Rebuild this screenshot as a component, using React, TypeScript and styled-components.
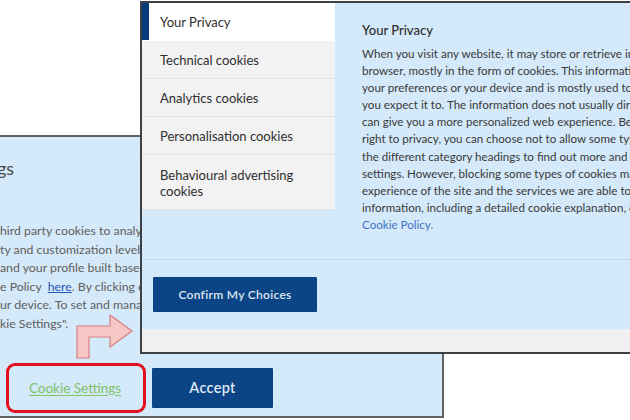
import React from 'react';
import styled, { createGlobalStyle } from 'styled-components';

const GlobalStyle = createGlobalStyle`
  html, body {
    margin: 0;
    padding: 0;
    background: #ffffff;
  }
  body {
    font-family: 'Lato', 'Open Sans', 'Liberation Sans', sans-serif;
    color: #333333;
  }
`;

const Stage = styled.div`
  position: relative;
  width: 630px;
  height: 420px;
  overflow: hidden;
  background: #ffffff;
`;

/* ---------- back window: the cookie banner ---------- */

const Banner = styled.section`
  position: absolute;
  left: -20px;
  top: 135px;
  width: 464px;
  height: 283px;
  box-sizing: border-box;
  border: 2px solid #5e6366;
  background: #d4e9f9;
  display: flex;
  flex-direction: column;
  padding: 19px 0 0 18px;
`;

const BannerTitle = styled.h2`
  margin: 0 0 0 -3px;
  font-size: 18px;
  line-height: 24px;
  font-weight: 400;
  color: #4a4a4a;
`;

const BannerText = styled.div`
  margin-top: 42px;
  font-size: 12.3px;
  line-height: 18.6px;
  color: #606060;
  white-space: nowrap;
`;

const TextLine = styled.div``;

const InlineLink = styled.a`
  color: #2856b0;
  text-decoration: underline;
`;

const BannerActions = styled.div`
  margin-top: 29px;
  margin-left: 6px;
  display: flex;
  align-items: center;
  gap: 6px;
`;

const Highlight = styled.div`
  width: 140px;
  height: 50px;
  box-sizing: border-box;
  border: 3px solid #e3101e;
  border-radius: 9px;
  display: flex;
  align-items: center;
  justify-content: center;
  padding-right: 2px;
`;

const SettingsLink = styled.a`
  font-size: 13.5px;
  color: #7fc16a;
  text-decoration: underline;
  text-underline-offset: 2px;
`;

const PrimaryButton = styled.button<{ $w: number; $h: number; $size: number }>`
  width: ${({ $w }) => $w}px;
  height: ${({ $h }) => $h}px;
  border: none;
  border-radius: 1px;
  background: #0b4586;
  color: #dfe7f1;
  font-family: inherit;
  font-size: ${({ $size }) => $size}px;
  font-weight: 600;
  letter-spacing: 0.3px;
  padding: 0;
  cursor: pointer;
`;

/* ---------- front window: preference centre ---------- */

const Dialog = styled.section`
  position: absolute;
  left: 140px;
  top: 1px;
  width: 520px;
  height: 353px;
  box-sizing: border-box;
  border: 2px solid #3d4144;
  background: #d4e9f9;
  display: grid;
  grid-template-rows: 256px 1px 69px 1fr;
`;

const Main = styled.div`
  display: grid;
  grid-template-columns: 193px 1fr;
`;

const Sidebar = styled.nav`
  display: flex;
  flex-direction: column;
`;

const Tab = styled.div<{ $active?: boolean; $tall?: boolean }>`
  height: ${({ $tall }) => ($tall ? '55px' : '38px')};
  box-sizing: border-box;
  display: flex;
  align-items: ${({ $tall }) => ($tall ? 'flex-start' : 'center')};
  padding: ${({ $tall }) => ($tall ? '12px 0 0 18px' : '0 0 0 18px')};
  border-bottom: 1px solid ${({ $active }) => ($active ? '#ffffff' : '#e2e2e2')};
  background: ${({ $active }) => ($active ? '#ffffff' : '#f2f2f2')};
  box-shadow: ${({ $active }) => ($active ? 'inset 7px 0 0 #073a78' : 'none')};
  font-size: 13px;
  line-height: 16px;
  color: #2f2f2f;
`;

const Content = styled.div`
  padding: 18px 0 0 27px;
  white-space: nowrap;
  overflow: hidden;
`;

const ContentTitle = styled.h3`
  margin: 0 0 6px 0;
  font-size: 13px;
  line-height: 18px;
  font-weight: 500;
  color: #2f2f2f;
`;

const Body = styled.div`
  font-size: 11.6px;
  line-height: 17.1px;
  color: #3a3a3a;
`;

const PolicyLink = styled.a`
  color: #4474c6;
  text-decoration: none;
`;

const Divider = styled.div`
  background: #c3d8e8;
`;

const Footer = styled.div`
  display: flex;
  align-items: center;
  padding-left: 11px;
`;

const Strip = styled.div`
  background: #f0f0f0;
`;

/* ---------- annotation arrow ---------- */

const Arrow = styled.svg`
  position: absolute;
  left: 75px;
  top: 312px;
  width: 60px;
  height: 50px;
  overflow: visible;
`;

const bodyLines = [
  'When you visit any website, it may store or retrieve information on your',
  'browser, mostly in the form of cookies. This information might be about you,',
  'your preferences or your device and is mostly used to make the site work as',
  'you expect it to. The information does not usually directly identify you, but it',
  'can give you a more personalized web experience. Because we respect your',
  'right to privacy, you can choose not to allow some types of cookies. Click on',
  'the different category headings to find out more and change our default',
  'settings. However, blocking some types of cookies may impact your',
  'experience of the site and the services we are able to offer. More',
  'information, including a detailed cookie explanation, can be found in our',
];

const tabs = [
  { key: 'privacy', label: 'Your Privacy', active: true },
  { key: 'technical', label: 'Technical cookies' },
  { key: 'analytics', label: 'Analytics cookies' },
  { key: 'personal', label: 'Personalisation cookies' },
];

const App = () => {
  return (
    <Stage>
      <GlobalStyle />

      <Banner>
        <BannerTitle>gs</BannerTitle>
        <BannerText>
          <TextLine>hird party cookies to analyze</TextLine>
          <TextLine>ty and customization levels</TextLine>
          <TextLine>and your profile built based</TextLine>
          <TextLine>
            e Policy&nbsp; <InlineLink>here</InlineLink>. By clicking on
          </TextLine>
          <TextLine>ur device. To set and manage</TextLine>
          <TextLine>kie Settings".</TextLine>
        </BannerText>
        <BannerActions>
          <Highlight>
            <SettingsLink>Cookie Settings</SettingsLink>
          </Highlight>
          <PrimaryButton $w={121} $h={40} $size={14.5}>
            Accept
          </PrimaryButton>
        </BannerActions>
      </Banner>

      <Dialog>
        <Main>
          <Sidebar>
            {tabs.map((tab) => (
              <Tab key={tab.key} $active={tab.active}>
                {tab.label}
              </Tab>
            ))}
            <Tab $tall>
              Behavioural advertising
              <br />
              cookies
            </Tab>
          </Sidebar>
          <Content>
            <ContentTitle>Your Privacy</ContentTitle>
            <Body>
              {bodyLines.map((line) => (
                <div key={line}>{line}</div>
              ))}
              <PolicyLink>Cookie Policy.</PolicyLink>
            </Body>
          </Content>
        </Main>
        <Divider />
        <Footer>
          <PrimaryButton $w={164} $h={35} $size={12}>
            Confirm My Choices
          </PrimaryButton>
        </Footer>
        <Strip />
      </Dialog>

      <Arrow viewBox="0 0 60 50">
        <polygon
          points="2,46 2,14 35,14 35,3 57,19 35,35 35,25 14,25 14,46"
          fill="#f7c7c6"
          stroke="#d98080"
          strokeWidth="1.2"
          strokeLinejoin="miter"
        />
      </Arrow>
    </Stage>
  );
};

export default App;
